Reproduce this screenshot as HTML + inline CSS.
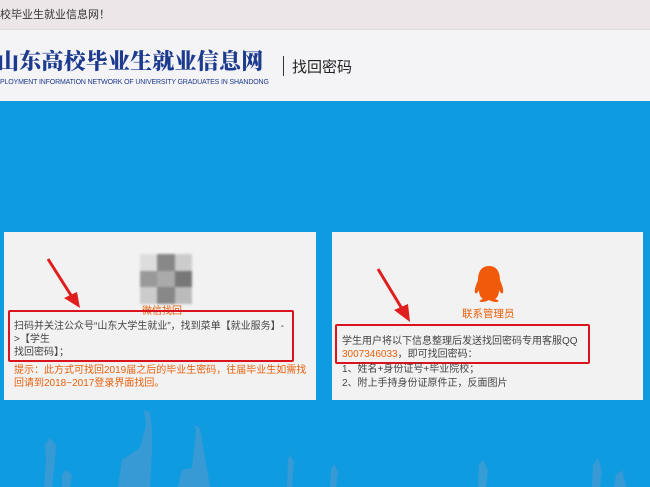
<!DOCTYPE html>
<html><head><meta charset="utf-8"><style>
*{margin:0;padding:0;box-sizing:border-box}
body{width:650px;height:487px;overflow:hidden;font-family:"Liberation Sans","Noto Sans CJK SC",sans-serif;background:#0f9be0;position:relative}
.top{position:absolute;left:0;top:0;width:650px;height:30px;background:#ece6e8;border-bottom:1px solid #ddd;font-size:11px;color:#333;line-height:30px}
.hdr{position:absolute;left:0;top:30px;width:650px;height:71px;background:#f4f4f6}
.logo{position:absolute;left:-3px;top:18px;font-family:"Noto Serif CJK SC",serif;font-weight:900;font-size:22px;line-height:26px;color:#1c3a8e;white-space:nowrap;letter-spacing:0.2px}
.en{position:absolute;left:0;top:49px;font-size:7px;color:#1c3a8e;white-space:nowrap;letter-spacing:-0.15px}
.sep{position:absolute;left:283px;top:26px;width:1px;height:20px;background:#333}
.find{position:absolute;left:292px;top:26px;font-size:15px;color:#222}
.card{position:absolute;top:232px;height:168px;background:#f2f2f2}
.c1{left:4px;width:312px}.c2{left:332px;width:311px}
.t{position:absolute;font-size:10px;line-height:13px;color:#444;white-space:nowrap}
.or{color:#e8600c}
.box{position:absolute;border:2px solid #d9141e;border-radius:2px}
.qr{position:absolute;left:136px;top:22px;width:52px;height:50px;display:grid;grid-template-columns:repeat(3,1fr);filter:blur(1px)}
</style></head><body>
<div class="top">校毕业生就业信息网！</div>
<div class="hdr">
<div class="logo">山东高校毕业生就业信息网</div>
<div class="en">PLOYMENT INFORMATION NETWORK OF UNIVERSITY GRADUATES IN SHANDONG</div>
<div class="sep"></div><div class="find">找回密码</div>
</div>
<svg style="position:absolute;left:0;top:400px" width="650" height="87">
<g fill="#5a9acb" opacity="0.55">
<path d="M44 87 L46 60 L45 45 L50 38 L56 45 L55 60 L52 87Z"/>
<path d="M62 87 L62 75 L66 70 L72 75 L70 87Z"/>
<path d="M118 87 L122 60 L140 48 L146 25 L144 10 L150 12 L152 30 L152 50 L150 87Z"/>
<path d="M178 87 L182 70 L192 68 L196 30 L194 25 L200 28 L202 40 L210 87Z"/>
<path d="M287 87 L288 60 L290 55 L294 62 L292 87Z"/>
<path d="M330 87 L331 70 L334 64 L338 72 L336 87Z"/>
<path d="M478 87 L479 65 L483 60 L488 70 L486 87Z"/>
<path d="M592 87 L593 65 L598 58 L602 72 L600 87Z"/>
<path d="M614 87 L616 75 L622 70 L626 87Z"/>
</g></svg>
<div class="card c1">
<div class="qr">
<div style="background:#ddd"></div><div style="background:#888"></div><div style="background:#ccc"></div>
<div style="background:#999"></div><div style="background:#aaa"></div><div style="background:#777"></div>
<div style="background:#ccc"></div><div style="background:#888"></div><div style="background:#bbb"></div>
</div>
<div class="t or" style="left:138px;top:73px">微信找回</div>
<svg style="position:absolute;left:40px;top:24px" width="40" height="52"><line x1="4" y1="3" x2="30" y2="44" stroke="#e01e1e" stroke-width="3"/><polygon points="36,52 20,42 33,36" fill="#e01e1e"/></svg>
<div class="box" style="left:4px;top:78px;width:286px;height:52px"></div>
<div class="t" style="left:10px;top:88px">扫码并关注公众号“山东大学生就业”，找到菜单【就业服务】-</div>
<div class="t" style="left:10px;top:101px">&gt;【学生</div>
<div class="t" style="left:10px;top:114px">找回密码】；</div>
<div class="t or" style="left:10px;top:132px">提示：此方式可找回2019届之后的毕业生密码，往届毕业生如需找</div>
<div class="t or" style="left:10px;top:145px">回请到2018~2017登录界面找回。</div>
</div>
<div class="card c2">
<svg style="position:absolute;left:140px;top:33px" width="34" height="38" viewBox="0 0 34 38"><path d="M17 1C8 1 6 9 6 15 4 20 2 25 3 28 5 29 6 27 7 25 7 30 9 33 11 34 8 35 6 36 9 37 13 37 15 36 17 35 19 36 21 37 25 37 28 36 26 35 23 34 25 33 27 30 27 25 28 27 29 29 31 28 32 25 30 20 28 15 28 9 26 1 17 1Z" fill="#f05a0a"/></svg>
<div class="t or" style="left:130px;top:76px;font-size:10.5px">联系管理员</div>
<svg style="position:absolute;left:42px;top:34px" width="40" height="56"><line x1="4" y1="3" x2="30" y2="46" stroke="#e01e1e" stroke-width="3"/><polygon points="36,56 20,44 34,38" fill="#e01e1e"/></svg>
<div class="box" style="left:3px;top:92px;width:255px;height:40px"></div>
<div class="t" style="left:10px;top:103px">学生用户将以下信息整理后发送找回密码专用客服QQ</div>
<div class="t" style="left:10px;top:116px"><span class="or">3007346033</span>，即可找回密码：</div>
<div class="t" style="left:10px;top:131px">1、姓名+身份证号+毕业院校；</div>
<div class="t" style="left:10px;top:145px">2、附上手持身份证原件正，反面图片</div>
</div>
</body></html>
